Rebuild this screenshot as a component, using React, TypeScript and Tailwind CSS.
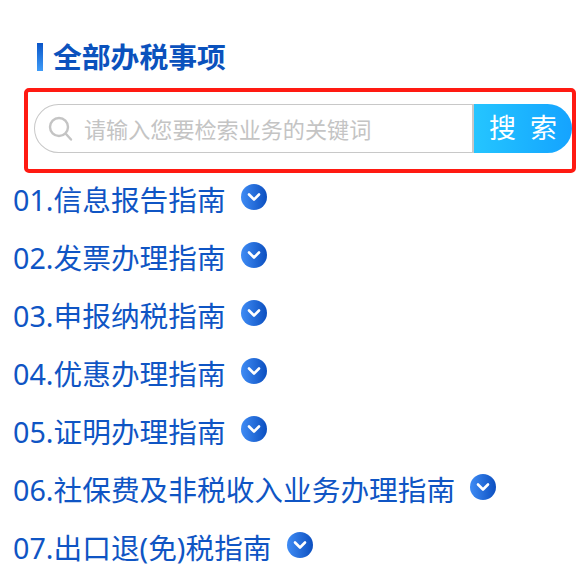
const items = [
  '01.信息报告指南',
  '02.发票办理指南',
  '03.申报纳税指南',
  '04.优惠办理指南',
  '05.证明办理指南',
  '06.社保费及非税收入业务办理指南',
  '07.出口退(免)税指南',
]

function ChevronBadge() {
  return (
    <span className="flex h-[26px] w-[26px] shrink-0 items-center justify-center rounded-full bg-gradient-to-r from-[#3f8cf5] to-[#0b4fc0]">
      <svg width="16" height="12" viewBox="0 0 16 12" fill="none">
        <path
          d="M3 3.5 L8 8.5 L13 3.5"
          stroke="#fff"
          strokeWidth="2.6"
          strokeLinecap="round"
          strokeLinejoin="round"
        />
      </svg>
    </span>
  )
}

export default function App() {
  return (
    <div className="h-[571px] w-[584px] overflow-hidden bg-white font-['Noto_Sans','Noto_Sans_CJK_SC',sans-serif]">
      <div className="flex items-center pl-[37px] pt-[43px]">
        <span className="h-[28px] w-[6px] bg-gradient-to-b from-[#0b55c8] to-[#3f9cf8]" />
        <h1 className="ml-[10px] text-[28.8px] leading-[28px] font-bold text-[#0b52bd]">
          全部办税事项
        </h1>
      </div>

      <div className="mt-[17px] ml-[24px] h-[85px] w-[552px] rounded-[5px] border-4 border-[#ff1a12] pt-[12px] pl-[6px]">
        <div className="flex h-[49px] w-[538px]">
          <div className="flex w-[440px] items-center rounded-l-[25px] border border-r-2 border-[#c8c8c8] pl-[13px]">
            <svg width="26" height="26" viewBox="0 0 26 26" fill="none">
              <circle cx="11" cy="11" r="9" stroke="#c4c4c4" strokeWidth="2.4" />
              <path d="M18 18 L23 23.5" stroke="#c4c4c4" strokeWidth="2.4" strokeLinecap="round" />
            </svg>
            <span className="ml-[10px] mt-[3px] text-[22.1px] text-[#c4c4c4]">请输入您要检索业务的关键词</span>
          </div>
          <div className="flex w-[98px] items-center justify-center gap-[14px] rounded-r-[25px] bg-gradient-to-r from-[#25c5ff] to-[#15a3ff] text-[27px] text-white">
            <span>搜</span>
            <span>索</span>
          </div>
        </div>
      </div>

      <ul className="-mt-[2px] pl-[13px]">
        {items.map((item) => (
          <li key={item} className="flex h-[58px] items-center gap-[15px] text-[#0f55c4]">
            <span className="text-[28.7px] leading-[58px]">{item}</span>
            <span className="-mt-[6px]">
              <ChevronBadge />
            </span>
          </li>
        ))}
      </ul>
    </div>
  )
}
